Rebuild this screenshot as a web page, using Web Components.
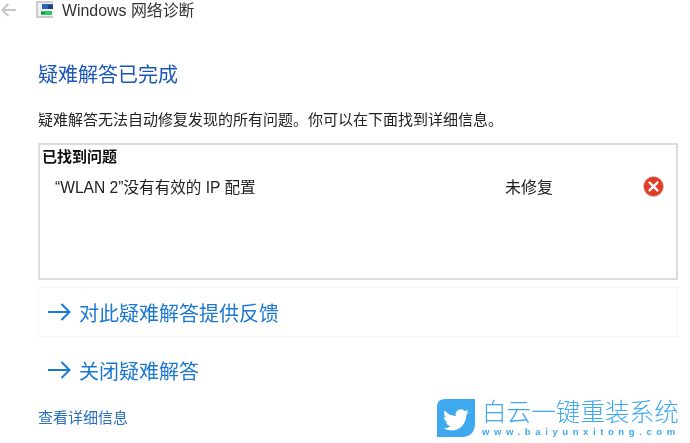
<!DOCTYPE html>
<html lang="zh">
<head>
<meta charset="utf-8">
<title>Windows 网络诊断</title>
<style>
html, body { margin: 0; padding: 0; background: #fff; }
body { width: 690px; height: 443px; overflow: hidden; font-family: "Liberation Sans", "Noto Sans CJK SC", sans-serif; color: #222; }
</style>
</head>
<body>
<diag-window>
    <title-bar slot="top">Windows 网络诊断</title-bar>
    <h-line>疑难解答已完成</h-line>
    <p-line>疑难解答无法自动修复发现的所有问题。你可以在下面找到详细信息。</p-line>
    <issue-box heading="已找到问题">
        <issue-row status="未修复">“WLAN 2”没有有效的 IP 配置</issue-row>
    </issue-box>
    <cmd-link boxed>对此疑难解答提供反馈</cmd-link>
    <cmd-link>关闭疑难解答</cmd-link>
    <foot-bar>
        <span slot="link">查看详细信息</span>
        <brand-logo slot="logo"></brand-logo>
    </foot-bar>
</diag-window>

<script>
const FONT = `"Liberation Sans", "Noto Sans CJK SC", sans-serif`;

class DiagWindow extends HTMLElement {
    constructor() {
        super();
        this.attachShadow({ mode: 'open' });
    }

    connectedCallback() {
        // the reference is a slightly soft upscaled capture
        this.shadowRoot.innerHTML = `
        <style>
        :host { display: block; width: 690px; height: 443px; background: #fff; font-family: ${FONT}; filter: blur(0.3px); }
        .content { display: flex; flex-direction: column; padding: 0 12px 0 38px; }
        </style>
        <slot name="top"></slot>
        <div class="content"><slot></slot></div>
      `;
    }
}

class TitleBar extends HTMLElement {
    constructor() {
        super();
        this.attachShadow({ mode: 'open' });
    }

    connectedCallback() {
        this.shadowRoot.innerHTML = `
        <style>
        :host { display: flex; align-items: center; height: 19px; padding-left: 1px; font-size: 15.9px; color: #333; }
        .back { width: 15px; height: 14px; margin-right: 20px; }
        .app { width: 19px; height: 17px; margin-right: 7px; }
        </style>
        <svg class="back" viewBox="0 0 15 14" fill="none" stroke="#c6c6c6" stroke-width="2">
            <path d="M1.4 7H15M7.4 1L1.4 7l6 6"/>
        </svg>
        <svg class="app" viewBox="0 0 19 17">
            <path d="M0 0H17V2H2V15H17V17H0Z" fill="#c9cbcd"/>
            <rect x="2" y="2" width="15" height="13" fill="#eef0f1"/>
            <rect x="6" y="3" width="11" height="5" fill="#2f62c0"/>
            <rect x="12" y="4" width="5" height="4" fill="#1b3f80"/>
            <rect x="5" y="10" width="11" height="4" fill="#2fc36a"/>
            <rect x="5" y="11" width="4" height="2" fill="#149a48"/>
        </svg>
        <slot></slot>
      `;
    }
}

class HLine extends HTMLElement {
    constructor() {
        super();
        this.attachShadow({ mode: 'open' }).innerHTML = `
        <style>
        :host { display: block; margin-top: 44px; height: 24px; line-height: 24px; font-size: 20px; color: #1a56b8; }
        </style>
        <slot></slot>`;
    }
}

class PLine extends HTMLElement {
    constructor() {
        super();
        this.attachShadow({ mode: 'open' }).innerHTML = `
        <style>
        :host { display: block; margin-top: 22px; height: 22px; line-height: 22px; font-size: 15px; color: #222; white-space: nowrap; }
        </style>
        <slot></slot>`;
    }
}

class IssueBox extends HTMLElement {
    constructor() {
        super();
        this.attachShadow({ mode: 'open' });
    }

    connectedCallback() {
        this.shadowRoot.innerHTML = `
        <style>
        :host { display: block; box-sizing: border-box; height: 137px; margin-top: 12px; border: 2px solid #dcdcdc; padding: 2px 0 0 2px; }
        .head { height: 20px; line-height: 20px; font-size: 15px; font-weight: bold; color: #111; }
        </style>
        <div class="head">${this.getAttribute('heading')}</div>
        <slot></slot>
      `;
    }
}

class IssueRow extends HTMLElement {
    constructor() {
        super();
        this.attachShadow({ mode: 'open' });
    }

    connectedCallback() {
        this.shadowRoot.innerHTML = `
        <style>
        :host { display: grid; grid-template-columns: 450px 138px 21px; align-items: center; margin-top: 7px; padding-left: 13px; height: 24px; font-size: 15.6px; color: #222; }
        .status { font-size: 16px; }
        svg { width: 21px; height: 21px; display: block; }
        </style>
        <div><slot></slot></div>
        <div class="status">${this.getAttribute('status')}</div>
        <svg viewBox="0 0 21 21">
            <circle cx="10.5" cy="10.5" r="10" fill="#e23b26" stroke="#c9c2bc" stroke-width="0.8"/>
            <path d="M6.6 6.6l7.8 7.8M14.4 6.6l-7.8 7.8" stroke="#fff" stroke-width="2.4" stroke-linecap="round"/>
        </svg>
      `;
    }
}

class CmdLink extends HTMLElement {
    constructor() {
        super();
        this.attachShadow({ mode: 'open' });
    }

    connectedCallback() {
        this.shadowRoot.innerHTML = `
        <style>
        :host { display: flex; align-items: center; box-sizing: border-box; height: 50px; margin-top: 7px; padding-left: 9px; border: 1px solid transparent; font-size: 20px; color: #1b78d2; }
        :host([boxed]) { border-color: #f6f6f6; }
        :host(:not([boxed])) { margin-top: 8px; }
        svg { width: 23px; height: 18px; margin-right: 8px; }
        </style>
        <svg viewBox="0 0 23 18" fill="none" stroke="#1b78d2" stroke-width="2">
            <path d="M0 9H21.5M13.5 1l8 8-8 8"/>
        </svg>
        <slot></slot>
      `;
    }
}

class FootBar extends HTMLElement {
    constructor() {
        super();
        this.attachShadow({ mode: 'open' });
    }

    connectedCallback() {
        this.shadowRoot.innerHTML = `
        <style>
        :host { display: flex; justify-content: space-between; align-items: flex-start; }
        .link { margin-top: 13px; font-size: 15px; line-height: 20px; color: #2a6fc0; white-space: nowrap; }
        </style>
        <div class="link"><slot name="link"></slot></div>
        <slot name="logo"></slot>
      `;
    }
}

class BrandLogo extends HTMLElement {
    constructor() {
        super();
        this.attachShadow({ mode: 'open' });
    }

    connectedCallback() {
        this.shadowRoot.innerHTML = `
        <style>
        :host { display: flex; gap: 7px; margin-top: 4px; margin-right: -2px; color: #3fa9f0; }
        svg { width: 38px; height: 38px; flex: none; }
        .text { display: flex; flex-direction: column; width: 198px; }
        .cn { font-size: 24.6px; line-height: 27px; font-weight: 300; white-space: nowrap; }
        .url { font-family: "Liberation Sans", sans-serif; font-size: 9.5px; line-height: 11px; letter-spacing: 4.6px; white-space: nowrap; font-weight: bold; }
        </style>
        <svg viewBox="0 0 38 38">
            <path d="M8 0H38V24Q38 38 24 38H0V8Q0 0 8 0Z" fill="#3fa9f0"/>
            <path transform="translate(6 8) scale(1.08)" fill="#fff" d="M23.95 4.57a10 10 0 01-2.82.77 4.96 4.96 0 002.16-2.72c-.95.55-2 .95-3.12 1.18a4.92 4.92 0 00-8.38 4.48C7.69 8.1 4.07 6.13 1.64 3.16a4.82 4.82 0 00-.67 2.48c0 1.71.87 3.21 2.19 4.1a4.9 4.9 0 01-2.23-.61v.06a4.92 4.92 0 003.95 4.83 5 5 0 01-2.21.08 4.94 4.94 0 004.6 3.42A9.87 9.87 0 010 19.54a14 14 0 007.56 2.21c9.05 0 14-7.5 14-13.98 0-.21 0-.42-.02-.63a9.94 9.94 0 002.46-2.55z"/>
        </svg>
        <div class="text">
            <div class="cn">白云一键重装系统</div>
            <div class="url">www.baiyunxitong.com</div>
        </div>
      `;
    }
}

customElements.define('diag-window', DiagWindow);
customElements.define('title-bar', TitleBar);
customElements.define('h-line', HLine);
customElements.define('p-line', PLine);
customElements.define('issue-box', IssueBox);
customElements.define('issue-row', IssueRow);
customElements.define('cmd-link', CmdLink);
customElements.define('foot-bar', FootBar);
customElements.define('brand-logo', BrandLogo);
</script>
</body>
</html>
